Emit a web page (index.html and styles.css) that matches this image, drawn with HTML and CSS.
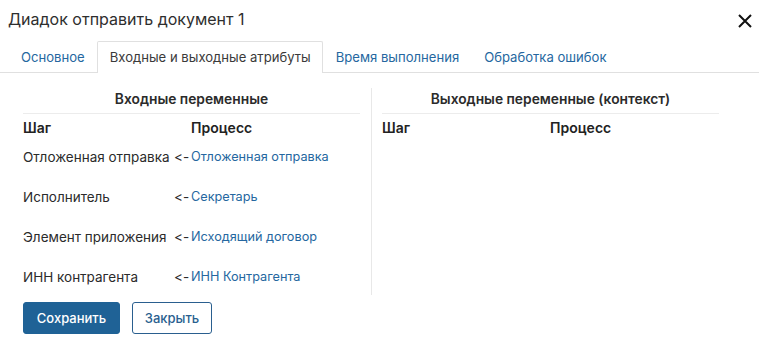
FILE: index.html
```html
<!DOCTYPE html>
<html lang="ru">

<head>
    <meta charset="UTF-8">
    <meta name="viewport" content="width=device-width, initial-scale=1.0">
    <title>Диадок отправить документ 1</title>
    <link rel="stylesheet" href="styles.css">
</head>

<body>
    <div class="dialog">
        <!-- заголовок -->
        <div class="dialog-header">
            <div class="dialog-title">Диадок отправить документ 1</div>
            <button class="close-btn" aria-label="Закрыть">
                <svg width="14" height="14" viewBox="0 0 14 14">
                    <path d="M1 1 L13 13 M13 1 L1 13" stroke="#111" stroke-width="2" fill="none" />
                </svg>
            </button>
        </div>

        <!-- вкладки -->
        <div class="tabs">
            <div class="tab">Основное</div>
            <div class="tab active">Входные и выходные атрибуты</div>
            <div class="tab">Время выполнения</div>
            <div class="tab">Обработка ошибок</div>
        </div>

        <!-- переменные -->
        <div class="vars">
            <div class="vars-col">
                <div class="vars-title">Входные переменные</div>
                <div class="vars-grid">
                    <div class="head head-step">Шаг</div>
                    <div class="head">Процесс</div>

                    <div class="step">Отложенная отправка</div>
                    <div class="arrow">&lt;-</div>
                    <a class="proc" href="#">Отложенная отправка</a>

                    <div class="step">Исполнитель</div>
                    <div class="arrow">&lt;-</div>
                    <a class="proc" href="#">Секретарь</a>

                    <div class="step">Элемент приложения</div>
                    <div class="arrow">&lt;-</div>
                    <a class="proc" href="#">Исходящий договор</a>

                    <div class="step">ИНН контрагента</div>
                    <div class="arrow">&lt;-</div>
                    <a class="proc" href="#">ИНН Контрагента</a>
                </div>
            </div>

            <div class="vars-sep"></div>

            <div class="vars-col">
                <div class="vars-title">Выходные переменные (контекст)</div>
                <div class="vars-grid">
                    <div class="head head-step">Шаг</div>
                    <div class="head">Процесс</div>
                </div>
            </div>
        </div>

        <!-- кнопки -->
        <div class="actions">
            <button class="btn btn-primary">Сохранить</button>
            <button class="btn btn-outline">Закрыть</button>
        </div>
    </div>
</body>

</html>
```

FILE: styles.css
```css
html,
body {
    margin: 0;
    background: #fff;
    font-family: Inter, "Noto Sans", Arial, sans-serif;
    font-feature-settings: "calt" 0;
    font-variant-ligatures: none;
    color: #2b2b2b;
}

.dialog {
    width: 759px;
    height: 339px;
    overflow: hidden;
}

/* заголовок */
.dialog-header {
    display: flex;
    align-items: center;
    justify-content: space-between;
    padding: 8px 7px 0 8px;
    height: 22px;
}

.dialog-title {
    font-size: 16px;
    line-height: 22px;
    color: #2e2e2e;
}

.close-btn {
    border: none;
    background: transparent;
    padding: 0;
    width: 14px;
    height: 14px;
    margin-top: 4px;
    cursor: pointer;
}

/* вкладки */
.tabs {
    display: flex;
    margin-top: 11px;
    padding-left: 8px;
    border-bottom: 1px solid #e0e0e0;
}

.tab {
    font-size: 13.1px;
    line-height: 30px;
    padding: 0 11px 0 12px;
    color: #2567a0;
    border: 1px solid transparent;
    border-bottom: none;
    margin-bottom: -1px;
    cursor: pointer;
}

.tab.active {
    color: #3a3a3a;
    background: #fff;
    border-color: #e0e0e0;
    border-radius: 2px 2px 0 0;
    height: 31px;
}

/* переменные */
.vars {
    display: flex;
    margin-top: 15px;
    padding-left: 23px;
}

.vars-col {
    width: 337px;
    padding-bottom: 10px;
}

.vars-sep {
    width: 1px;
    background: #e8e8e8;
    margin: 0 10px 0 11px;
}

.vars-title {
    text-align: center;
    font-size: 13.8px;
    font-weight: 600;
    line-height: 18px;
    padding: 2px 0 5px;
    border-bottom: 1px solid #ececec;
    color: #2b2b2b;
}

.vars-grid {
    display: grid;
    grid-template-columns: 151px 17px 1fr;
    row-gap: 24px;
    font-size: 13.5px;
    line-height: 16px;
    margin-top: 6px;
}

.vars-grid .head {
    font-size: 14px;
    font-weight: 600;
    color: #222;
    margin-bottom: -11px;
}

.head-step {
    grid-column: 1 / 3;
}

.step {
    color: #2b2b2b;
    white-space: nowrap;
}

.arrow {
    color: #2b2b2b;
}

.proc {
    font-size: 12.7px;
    color: #2567a0;
    text-decoration: none;
    white-space: nowrap;
}

/* кнопки */
.actions {
    display: flex;
    gap: 12px;
    padding-left: 23px;
    margin-top: 7px;
}

.btn {
    height: 32px;
    font-family: inherit;
    font-size: 13px;
    font-weight: 500;
    border-radius: 3px;
    cursor: pointer;
}

.btn-primary {
    width: 97px;
    background: #1f6296;
    color: #fff;
    border: 1px solid #1f6296;
}

.btn-outline {
    width: 80px;
    background: #fff;
    color: #2a5f8f;
    border: 1px solid #2a5f8f;
}
```
